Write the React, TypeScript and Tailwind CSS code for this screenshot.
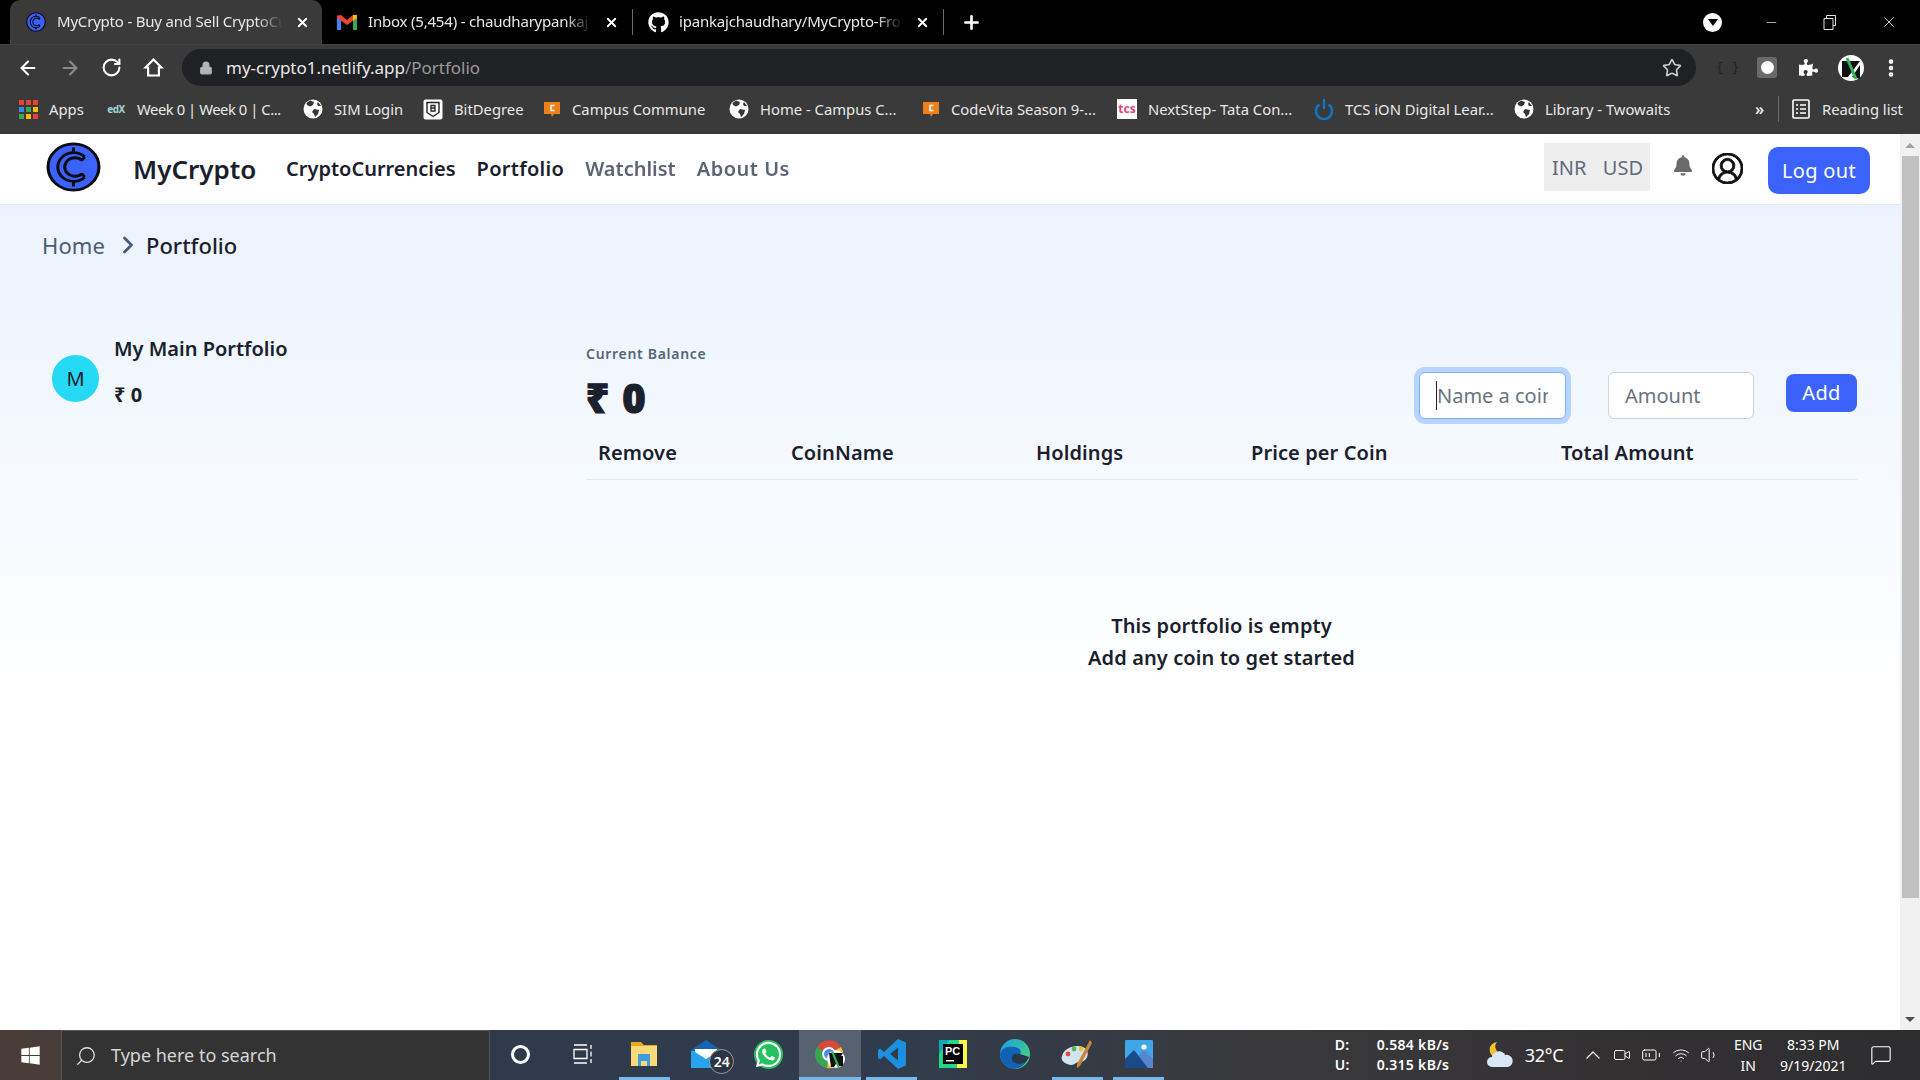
import React from 'react'
import { ArrowLeft, ArrowRight, RotateCw, Lock, Star, X, Plus, Search, ChevronRight, ChevronUp, Minus, EllipsisVertical, Wifi, Volume1, Video, BatteryMedium, MessageSquare } from 'lucide-react'
import { FaBell, FaGithub, FaWhatsapp, FaWindows, FaPuzzlePiece } from 'react-icons/fa'
import { VscAccount } from 'react-icons/vsc'

const Logo = ({ width = 55, height = 50 }: { width?: number; height?: number }) => (
  <svg width={width} height={height} viewBox="0 0 54 54" preserveAspectRatio="none">
    <circle cx="27" cy="27" r="25" fill="#3b63fb" stroke="#0b0b14" strokeWidth="3" />
    <path d="M38 16 A15.5 15.5 0 1 0 38 38" fill="none" stroke="#0b0b14" strokeWidth="3" />
    <path d="M35.5 20 A10 10 0 1 0 35.5 34" fill="none" stroke="#0b0b14" strokeWidth="3" />
    <path d="M38 16l-3 4M38 38l-3-4M27 6v6M27 42v6" stroke="#0b0b14" strokeWidth="3" />
  </svg>
)

const Globe = () => (
  <svg width="20" height="20" viewBox="0 0 20 20">
    <circle cx="10" cy="10" r="9.5" fill="#fff" />
    <path d="M7 1.5 11 3l-1 3-3 1.5L4 6 3.5 4ZM11 10l5 1-1 4-3 3-1-3-2-2ZM15 3l3 4-3 0-1-2Z" fill="#35363a" />
  </svg>
)

const OrangeC = () => (
  <svg width="18" height="18" viewBox="0 0 18 18">
    <path d="M1 2h16v12h-6l-2 3-1-3H1Z" fill="#ee7f1b" />
    <path d="M11.5 5.5H8v5h3.5" fill="none" stroke="#fff" strokeWidth="1.6" />
  </svg>
)

const bookmarks: { label: string; width: string; tight?: boolean; icon: React.ReactNode }[] = [
  {
    label: 'Apps',
    width: 'w-[87px]',
    icon: (
      <svg width="19" height="19" viewBox="0 0 19 19">
        {[0, 7, 14].map((y, r) =>
          [0, 7, 14].map((x, c) => (
            <rect key={`${r}-${c}`} x={x} y={y} width="5" height="5" fill={[['#ea4335', '#ea4335', '#ea4335'], ['#4285f4', '#34a853', '#fbbc05'], ['#34a853', '#fbbc05', '#ea4335']][r][c]} />
          ))
        )}
      </svg>
    ),
  },
  {
    label: 'Week 0 | Week 0 | C...',
    width: 'w-[197px]',
    tight: true,
    icon: (
      <span className="flex h-[19px] w-[20px] items-center justify-center text-[10px] font-bold leading-none text-[#9fd3d8]">
        edX
      </span>
    ),
  },
  { label: 'SIM Login', width: 'w-[120px]', icon: <Globe /> },
  {
    label: 'BitDegree',
    width: 'w-[120px]',
    icon: (
      <svg width="20" height="21" viewBox="0 0 20 21">
        <rect x="0.5" y="0.5" width="19" height="20" rx="2" fill="#fff" />
        <path d="M4 3.5h12v10l-6 4-6-4Z" fill="none" stroke="#222" strokeWidth="1.4" />
        <path d="M8 6.5h4v2.5H8h4v3H8Z" fill="none" stroke="#222" strokeWidth="1.3" />
      </svg>
    ),
  },
  { label: 'Campus Commune', width: 'w-[186px]', icon: <OrangeC /> },
  { label: 'Home - Campus C...', width: 'w-[193px]', icon: <Globe /> },
  { label: 'CodeVita Season 9-...', width: 'w-[195px]', icon: <OrangeC /> },
  {
    label: 'NextStep- Tata Con...',
    width: 'w-[197px]',
    icon: (
      <span className="flex h-[20px] w-[20px] items-center justify-center bg-white text-[12px] font-bold leading-none text-[#e0457b]">
        tcs
      </span>
    ),
  },
  {
    label: 'TCS iON Digital Lear...',
    width: 'w-[200px]',
    icon: (
      <svg width="20" height="22" viewBox="0 0 20 22" fill="none" stroke="#0a78c8" strokeWidth="2.4">
        <path d="M5.5 6.5A8 8 0 1 0 14.5 6.5M10 1v10" />
      </svg>
    ),
  },
  { label: 'Library - Twowaits', width: 'w-[241px]', icon: <Globe /> },
]

const tabs = [
  { title: 'MyCrypto - Buy and Sell CryptoCurrencies', active: true, icon: <Logo width={20} height={20} /> },
  {
    title: 'Inbox (5,454) - chaudharypankaj',
    active: false,
    icon: (
      <svg width="20" height="16" viewBox="0 0 20 16">
        <path d="M0 3v13h4V6Z" fill="#4285f4" />
        <path d="M20 3v13h-4V6Z" fill="#34a853" />
        <path d="M0 1.5 4 1l6 5 6-5 4 .5V4l-10 7L0 4Z" fill="#ea4335" />
        <path d="M16 1l4 0v3l-4 3Z" fill="#fbbc05" />
      </svg>
    ),
  },
  { title: 'ipankajchaudhary/MyCrypto-Frontend', active: false, icon: <FaGithub className="h-[21px] w-[21px] text-white" /> },
]

const TabBar = () => (
  <div className="flex h-[44px] shrink-0 items-end bg-black pl-[10px] text-white">
    {tabs.map((t, i) => (
      <div
        key={i}
        className={
          t.active
            ? 'flex h-[44px] w-[312px] items-center rounded-t-[10px] bg-[#3a3a3a] pl-[16px]'
            : 'flex h-[44px] w-[311px] items-center pl-[15px]'
        }
      >
        <span className="flex w-[31px] shrink-0">{t.icon}</span>
        <span className="-mt-[2px] w-[226px] overflow-hidden whitespace-nowrap text-[15px] tracking-[-0.2px] text-[#e8e8e8] [mask-image:linear-gradient(90deg,#000_88%,transparent)]">{t.title}</span>
        <X className="ml-[12px] h-[15px] w-[15px] shrink-0" strokeWidth={3} />
        {i > 0 && <span className="ml-[13px] h-[26px] w-px shrink-0 bg-[#6a6a6a]" />}
      </div>
    ))}
    <div className="flex h-[44px] items-center pl-[17px]">
      <Plus className="h-[21px] w-[21px]" strokeWidth={3} />
    </div>
    <div className="ml-auto flex h-[44px] items-center">
      <span className="flex h-[19px] w-[19px] items-center justify-center rounded-full bg-white">
        <span className="h-0 w-0 border-x-[5px] border-t-[7px] border-x-transparent border-t-black" />
      </span>
      <Minus className="ml-[42px] h-[15px] w-[15px] text-[#e6e6e6]" strokeWidth={1.2} />
      <svg className="ml-[44px] text-[#e6e6e6]" width="14" height="16" viewBox="0 0 14 16" fill="none" stroke="currentColor">
        <path d="M1 4.5h9v11H1ZM3.5 4V1.5h9v10H10" />
      </svg>
      <X className="ml-[43px] mr-[22px] h-[18px] w-[18px] text-[#e6e6e6]" strokeWidth={1.2} />
    </div>
  </div>
)

const Toolbar = () => (
  <div className="flex h-[46px] shrink-0 items-center border-t border-[#444] bg-[#3a3a3a] pl-[17px] text-white">
    <ArrowLeft className="h-[22px] w-[22px]" strokeWidth={2.2} />
    <ArrowRight className="ml-[20px] h-[22px] w-[22px] text-[#8a8a8a]" strokeWidth={2.2} />
    <RotateCw className="ml-[20px] h-[21px] w-[21px]" strokeWidth={2.4} />
    <svg className="ml-[21px]" width="21" height="21" viewBox="0 0 21 21" fill="none" stroke="#fff" strokeWidth="2.2">
      <path d="M10.5 2.5 2.5 10.5h2.6v8h10.8v-8h2.6Z" strokeLinejoin="miter" />
    </svg>
    <div className="ml-[18px] flex h-[37px] w-[1514px] items-center rounded-full bg-[#202124] pl-[17px] pr-[14px]">
      <Lock className="h-[14px] w-[14px] text-[#b4b4b4]" fill="#b4b4b4" />
      <span className="ml-[13px] text-[17px] text-[#e8e8e8]">
        my-crypto1.netlify.app<span className="text-[#9a9a9a]">/Portfolio</span>
      </span>
      <Star className="ml-auto h-[20px] w-[20px] text-[#c8c8c8]" strokeWidth={2} />
    </div>
    <span className="ml-[20px] w-[20px] whitespace-nowrap text-center font-['Liberation_Mono',monospace] text-[13px] text-[#222]">{'{ }'}</span>
    <span className="ml-[21px] flex h-[21px] w-[20px] items-center justify-center rounded-[3px] bg-[#6a6a6a]">
      <span className="h-[13px] w-[13px] rounded-full bg-white" />
    </span>
    <FaPuzzlePiece className="ml-[22px] h-[19px] w-[19px]" />
    <svg className="ml-[20px]" width="26" height="26" viewBox="0 0 26 26">
      <circle cx="13" cy="13" r="13" fill="#fff" />
      <path d="M4 6h18L10 22H4Z M14 22l8-12v14" fill="#111" />
      <path d="M9 3l9 21" stroke="#2fb45a" strokeWidth="3" />
    </svg>
    <EllipsisVertical className="ml-[16px] h-[22px] w-[22px]" strokeWidth={3} />
  </div>
)

const BookmarksBar = () => (
  <div className="flex h-[44px] shrink-0 items-center bg-[#3a3a3a] pb-[6px] pl-[19px] text-[14.8px] text-[#e8e8e8]">
    {bookmarks.map((b) => (
      <div key={b.label} className={`flex items-center gap-[11px] whitespace-nowrap ${b.width} ${b.tight ? 'tracking-[-0.45px]' : ''}`}>
        {b.icon}
        <span>{b.label}</span>
      </div>
    ))}
    <span className="w-[18px] text-[16px] font-semibold">»</span>
    <span className="ml-[5px] h-[26px] w-px bg-[#666]" />
    <svg className="ml-[13px]" width="18" height="20" viewBox="0 0 18 20" fill="none" stroke="#fff" strokeWidth="1.6">
      <rect x="1" y="1" width="16" height="18" rx="1" />
      <path d="M4 6h2M8 6h6M4 10h2M8 10h6M4 14h2M8 14h6" />
    </svg>
    <span className="ml-[12px]">Reading list</span>
  </div>
)

const NavBar = () => (
  <nav className="flex h-[71px] shrink-0 items-center border-b border-[#e6eaf0] bg-white pl-[46px] pr-[30px] text-[#1a202c]">
    <span className="-mt-[5px] flex">
      <Logo />
    </span>
    <span className="ml-[32px] w-[153px] text-[26px] font-semibold">MyCrypto</span>
    <div className="flex items-center gap-[21px] text-[20px] font-semibold">
      <span>CryptoCurrencies</span>
      <span className="tracking-[0.3px]">Portfolio</span>
      <span className="text-[#4a5568] opacity-90">Watchlist</span>
      <span className="tracking-[0.5px] text-[#4a5568] opacity-90">About Us</span>
    </div>
    <div className="-mt-[4px] ml-auto flex h-[48px] w-[106px] items-center justify-between bg-[#eeeeee] pl-[8px] pr-[7px] pt-[1px] text-[20px] text-[#5f6b7c]">
      <span>INR</span>
      <span>USD</span>
    </div>
    <FaBell className="-mt-[8px] ml-[24px] h-[21px] w-[18px] text-[#6b6b6b]" />
    <VscAccount className="-mt-[2px] ml-[20px] h-[31px] w-[31px] text-[#111]" stroke="currentColor" strokeWidth={0.5} />
    <button className="ml-[25px] mt-[3px] h-[47px] w-[102px] rounded-[10px] bg-[#3b63fb] pt-[1px] text-[20px] tracking-[0.3px] text-white">Log out</button>
  </nav>
)

const columns = ['Remove', 'CoinName', 'Holdings', 'Price per Coin', 'Total Amount']

const PortfolioBody = () => (
  <main className="flex-1 bg-gradient-to-b from-[#ebf3fe] to-white to-[60%] text-[#1a202c]">
    <div className="mt-[24px] flex h-[32px] items-center pl-[42px] text-[22px]">
      <span className="tracking-[0.1px] text-[#4a5d78]">Home</span>
      <ChevronRight className="ml-[9px] h-[28px] w-[28px] text-[#4a5d78]" strokeWidth={2.4} />
      <span className="ml-[4px] font-medium">Portfolio</span>
    </div>

    <div className="mt-[74px] flex">
      <div className="flex w-[586px] gap-[15px] pl-[52px]">
        <span className="mt-[20px] flex h-[47px] w-[47px] items-center justify-center rounded-full bg-[#26d9f5] text-[20px] text-[#1a202c]">M</span>
        <div>
          <p className="text-[20px] font-semibold leading-[28px]">My Main Portfolio</p>
          <p className="mt-[18px] text-[20px] font-bold leading-[28px]">₹ 0</p>
        </div>
      </div>

      <div className="w-[1271px]">
        <p className="mt-[9px] text-[14px] font-semibold leading-[20px] tracking-[0.7px] text-[#56657a]">Current Balance</p>
        <div className="flex h-[63px] items-start">
          <p className="mt-[10px] text-[40px] font-black leading-[48px] tracking-[1.2px] [-webkit-text-stroke:1px_#1a202c]">₹ 0</p>
          <div className="relative ml-auto mt-[8px]">
            <input
              readOnly
              placeholder="Name a coin"
              className="h-[47px] w-[147px] rounded-[6px] border border-[#7fb0f5] bg-white px-[17px] text-[20px] outline-none ring-[5px] ring-[#b7d5ff] placeholder:text-[#6b7280]"
            />
            <span className="absolute left-[17px] top-[9px] h-[29px] w-px bg-[#1a202c]" />
          </div>
          <input
            readOnly
            placeholder="Amount"
            className="ml-[42px] mt-[8px] h-[47px] w-[146px] rounded-[6px] border border-[#cbd5e0] bg-white px-[16px] text-[20px] outline-none placeholder:text-[#6b7280]"
          />
          <button className="ml-[32px] mt-[10px] h-[38px] w-[71px] rounded-[8px] bg-[#3b63fb] text-[20px] tracking-[0.3px] text-white">Add</button>
        </div>
        <div className="grid h-[53px] grid-cols-[193px_245px_215px_310px_1fr] items-center border-b border-[#e2e8f0] pl-[12px] text-[20px] font-semibold tracking-[0.1px]">
          {columns.map((c) => (
            <span key={c}>{c}</span>
          ))}
        </div>
        <div className="mt-[130px] text-center text-[20px] font-semibold leading-[32px] tracking-[0.1px]">
          <p>This portfolio is empty</p>
          <p>Add any coin to get started</p>
        </div>
      </div>
    </div>
  </main>
)

const Scrollbar = () => (
  <div className="flex w-[20px] shrink-0 flex-col items-center bg-[#f1f1f1]">
    <div className="flex h-[22px] items-center">
      <span className="h-0 w-0 border-x-[5px] border-b-[5px] border-x-transparent border-b-[#a3a3a3]" />
    </div>
    <div className="h-[742px] w-[17px] bg-[#c1c1c1]" />
    <div className="mt-auto flex h-[22px] items-center">
      <span className="h-0 w-0 border-x-[5px] border-t-[5px] border-x-transparent border-t-[#505050]" />
    </div>
  </div>
)

const taskIcons: { key: string; open?: boolean; active?: boolean; icon: React.ReactNode }[] = [
  { key: 'cortana', icon: <span className="h-[19px] w-[19px] rounded-full border-[3px] border-white" /> },
  {
    key: 'taskview',
    icon: (
      <svg width="20" height="20" viewBox="0 0 20 20" fill="none" stroke="#fff" strokeWidth="1.3">
        <path d="M1 1h13M1 19h13M1 5.5h13v9H1ZM18 1v4M18 7.5v5M18 15v4" />
      </svg>
    ),
  },
  {
    key: 'files',
    open: true,
    icon: (
      <svg width="28" height="24" viewBox="0 0 28 24">
        <path d="M1 0h10l3 3h13v21H1Z" fill="#e5a81f" />
        <rect x="1" y="4" width="26" height="20" rx="1" fill="#f9d977" />
        <path d="M8 12h12v12h-3v-5h-6v5H8Z" fill="#3f9be0" />
      </svg>
    ),
  },
  {
    key: 'mail',
    icon: (
      <span className="relative flex">
        <svg width="30" height="28" viewBox="0 0 30 28">
          <path d="M0 10 15 0l15 10v18H0Z" fill="#1565b0" />
          <path d="M0 11h30v17H0Z" fill="#27a4ee" />
          <path d="M4 9h22v3l-11 7-11-7Z" fill="#fff" />
        </svg>
        <span className="absolute -bottom-[6px] -right-[13px] flex h-[25px] w-[25px] items-center justify-center rounded-full border border-[#999] bg-[#2c3444] text-[14px] font-semibold text-white">24</span>
      </span>
    ),
  },
  {
    key: 'whatsapp',
    icon: (
      <span className="flex rounded-full bg-[#25c15e]">
        <FaWhatsapp className="h-[29px] w-[29px] text-white" />
      </span>
    ),
  },
  {
    key: 'chrome',
    open: true,
    active: true,
    icon: (
      <svg width="32" height="30" viewBox="0 0 32 30">
        <path d="M15 15 3 8A14 14 0 0 1 27 8Z" fill="#d9483b" />
        <path d="M15 15 3 8A14 14 0 0 0 13 29Z" fill="#3aa655" />
        <path d="M15 15 27 8A14 14 0 0 1 13 29Z" fill="#f2c13a" />
        <circle cx="15" cy="15" r="6" fill="#4b8df5" stroke="#fff" strokeWidth="2" />
        <circle cx="22" cy="20" r="9" fill="#fff" />
        <path d="M15 14h14l-9 14h-3ZM23 17l6 0v10h-6Z" fill="#111" />
        <path d="M18 12l7 17" stroke="#2fb45a" strokeWidth="2" />
      </svg>
    ),
  },
  {
    key: 'vscode',
    open: true,
    icon: (
      <svg width="28" height="30" viewBox="0 0 28 30">
        <path d="M20 0 28 3.5v23L20 30 6 17l-4 3.5L0 19V11l2-1.5L6 13ZM20 8.5 12 15l8 6.5Z" fill="#1c8fe0" fillRule="evenodd" />
      </svg>
    ),
  },
  {
    key: 'pycharm',
    icon: (
      <svg width="28" height="28" viewBox="0 0 28 28">
        <rect width="28" height="28" fill="#21d789" />
        <path d="M20 0h8v28h-10Z" fill="#fcf84a" />
        <path d="M0 0h10L0 14Z" fill="#12a6b8" />
        <rect x="4" y="4" width="20" height="20" fill="#000" />
        <path d="M7 20h8v1.5H7Z" fill="#fff" />
        <text x="6" y="15" fill="#fff" fontSize="11" fontWeight="700" fontFamily="Liberation Sans">PC</text>
      </svg>
    ),
  },
  {
    key: 'edge',
    icon: (
      <svg width="30" height="30" viewBox="0 0 30 30">
        <defs>
          <linearGradient id="edgeTop" x1="0" y1="0" x2="1" y2="1">
            <stop offset="0" stopColor="#1b9de2" />
            <stop offset="1" stopColor="#4fdc6f" />
          </linearGradient>
        </defs>
        <circle cx="15" cy="15" r="15" fill="url(#edgeTop)" />
        <path d="M0 15C2 8 9 7 15 8c5 1 7 4 5 7-3 0-6 2-5 5s7 5 12 2c-3 5-8 8-14 8C6 29 0 23 0 15Z" fill="#0f62b4" />
        <path d="M12 19c0-4 3-5 8-4 3 1 6 2 9 3-1 3-3 5-5 6-6 2-12 0-12-5Z" fill="#2b3545" />
      </svg>
    ),
  },
  {
    key: 'paint',
    open: true,
    icon: (
      <svg width="32" height="30" viewBox="0 0 32 30">
        <path d="M1 17C3 9 14 5 22 8c6 3 6 9 2 13-4 3-6 1-9 3-3 3-8 2-11 0-3-2-4-4-3-7Z" fill="#d2e4f2" />
        <circle cx="7" cy="15" r="2.4" fill="#e24a3b" />
        <circle cx="13" cy="10" r="2.4" fill="#57b947" />
        <circle cx="20" cy="10" r="2.4" fill="#f2c230" />
        <path d="M29 1 31 4 19 27l-3 2 0-4Z" fill="#c9853a" />
      </svg>
    ),
  },
  {
    key: 'photos',
    open: true,
    icon: (
      <svg width="28" height="28" viewBox="0 0 28 28">
        <rect width="28" height="28" rx="1" fill="#3ea7ea" />
        <circle cx="19" cy="7" r="2.6" fill="#fff" />
        <path d="M14 15l5-5 9 9v9H16Z" fill="#5a83d0" />
        <path d="M0 19 9 10l14 18H0Z" fill="#1b4a8a" />
      </svg>
    ),
  },
]

const Taskbar = () => (
  <div className="flex h-[50px] shrink-0 items-center bg-[linear-gradient(90deg,#4a3d39_0%,#2f3a4b_25%,#303c4d_45%,#3a3a3d_65%,#333032_85%,#2d2d30_100%)] text-white">
    <div className="flex w-[61px] justify-center">
      <FaWindows className="h-[21px] w-[21px]" />
    </div>
    <div className="flex h-[50px] w-[429px] items-center border-x border-t border-[#555] bg-[#333333] pl-[13px] text-[18px] text-[#d6d6d6]">
      <Search className="h-[22px] w-[22px] -scale-x-100 text-[#e0e0e0]" strokeWidth={1.4} />
      <span className="ml-[14px]">Type here to search</span>
    </div>
    {taskIcons.map((t) => (
      <div key={t.key} className={`flex h-[50px] w-[61.8px] flex-col items-center ${t.active ? 'bg-[#566270]' : ''}`}>
        <div className="flex flex-1 items-center justify-center pt-[1px]">{t.icon}</div>
        <span className={`h-[3px] ${t.active ? 'w-full' : 'w-[51px]'} ${t.open ? 'bg-[#76b9ed]' : ''}`} />
      </div>
    ))}
    <div className="ml-[165px] grid grid-cols-[42px_84px] text-[14px] font-semibold leading-[20px] tracking-[0.3px]">
      <span>D:</span>
      <span>0.584 kB/s</span>
      <span>U:</span>
      <span>0.315 kB/s</span>
    </div>
    <svg className="ml-[24px]" width="30" height="30" viewBox="0 0 30 30">
      <path d="M12 2a8 8 0 1 0 8 11A7 7 0 0 1 12 2Z" fill="#f5c22f" />
      <path d="M7 27a5 5 0 0 1 0-10 7 7 0 0 1 13-2 6 6 0 0 1 3 12Z" fill="#d8e8f8" />
    </svg>
    <span className="ml-[10px] text-[18px] tracking-[-0.3px]">32°C</span>
    <ChevronUp className="ml-[18px] h-[24px] w-[24px]" strokeWidth={1.2} />
    <Video className="ml-[8px] h-[18px] w-[18px]" strokeWidth={1.2} />
    <BatteryMedium className="ml-[10px] h-[20px] w-[20px]" strokeWidth={1.2} />
    <Wifi className="ml-[11px] h-[18px] w-[18px]" strokeWidth={1.2} />
    <Volume1 className="ml-[10px] h-[20px] w-[20px]" strokeWidth={1.2} />
    <div className="ml-[10px] flex w-[36px] flex-col items-center text-[14px] leading-[21px]">
      <span>ENG</span>
      <span>IN</span>
    </div>
    <div className="ml-[7px] flex w-[80px] flex-col items-center text-[14px] leading-[21px]">
      <span>8:33 PM</span>
      <span>9/19/2021</span>
    </div>
    <MessageSquare className="ml-[17px] h-[22px] w-[22px]" strokeWidth={1.2} />
  </div>
)

export default function App() {
  return (
    <div className="flex h-screen w-full flex-col overflow-hidden bg-white font-['Noto_Sans',sans-serif]">
      <TabBar />
      <Toolbar />
      <BookmarksBar />
      <div className="flex min-h-0 flex-1">
        <div className="flex min-w-0 flex-1 flex-col">
          <NavBar />
          <PortfolioBody />
        </div>
        <Scrollbar />
      </div>
      <Taskbar />
    </div>
  )
}
